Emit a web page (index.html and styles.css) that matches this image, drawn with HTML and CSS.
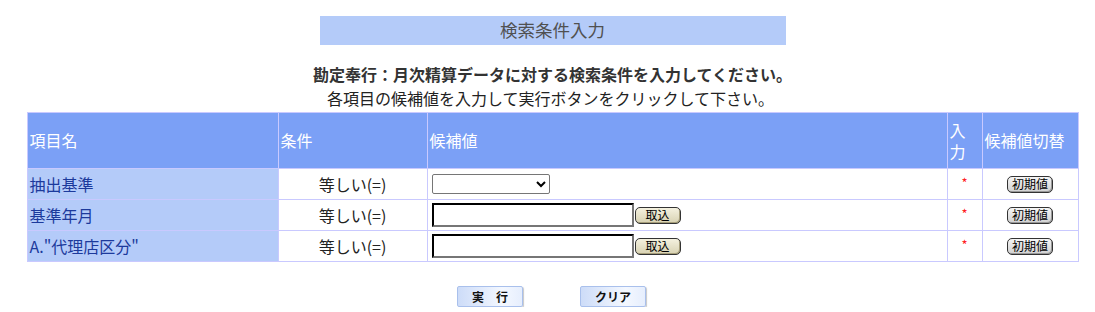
FILE: index.html
```html
<!DOCTYPE html>
<html lang="ja">

<head>
    <meta charset="UTF-8">
    <meta name="viewport" content="width=device-width, initial-scale=1.0">
    <title>検索条件入力</title>
    <link rel="stylesheet" href="styles.css">
</head>

<body>
    <div class="page">
        <div class="title-bar">検索条件入力</div>

        <p class="lead">勘定奉行：月次精算データに対する検索条件を入力してください。</p>
        <p class="note">各項目の候補値を入力して実行ボタンをクリックして下さい。</p>

        <table class="cond-table">
            <thead>
                <tr>
                    <th class="col-name">項目名</th>
                    <th class="col-cond">条件</th>
                    <th class="col-value">候補値</th>
                    <th class="col-req">入力</th>
                    <th class="col-switch">候補値切替</th>
                </tr>
            </thead>
            <tbody>
                <tr>
                    <td class="item">抽出基準</td>
                    <td class="cond">等しい(=)</td>
                    <td class="value">
                        <select class="pick"><option></option></select>
                    </td>
                    <td class="req">*</td>
                    <td class="switch"><button class="reset-btn">初期値</button></td>
                </tr>
                <tr>
                    <td class="item">基準年月</td>
                    <td class="cond">等しい(=)</td>
                    <td class="value">
                        <input type="text" class="field"><button class="load-btn">取込</button>
                    </td>
                    <td class="req">*</td>
                    <td class="switch"><button class="reset-btn">初期値</button></td>
                </tr>
                <tr>
                    <td class="item">A."代理店区分"</td>
                    <td class="cond">等しい(=)</td>
                    <td class="value">
                        <input type="text" class="field"><button class="load-btn">取込</button>
                    </td>
                    <td class="req">*</td>
                    <td class="switch"><button class="reset-btn">初期値</button></td>
                </tr>
            </tbody>
        </table>

        <div class="actions">
            <button class="action-btn">実&emsp;行</button>
            <button class="action-btn">クリア</button>
        </div>
    </div>
</body>

</html>
```

FILE: styles.css
```css
body {
    margin: 0;
    font-family: "Noto Sans CJK JP", "Noto Sans", sans-serif;
    font-size: 16px;
    color: #222;
    background: #fff;
}

.page {
    width: 1051px;
    padding: 16px 0 0 27px;
    display: flex;
    flex-direction: column;
    align-items: center;
}

.title-bar {
    width: 466px;
    height: 29px;
    line-height: 28px;
    background-color: #b4cbf9;
    color: #505050;
    text-align: center;
    font-size: 17.5px;
}

.lead {
    margin: 18px 0 0 0;
    font-weight: bold;
    line-height: 23px;
    color: #333;
}

.note {
    margin: 0;
    line-height: 24px;
    color: #222;
    transform: translateX(-2px);
}

.cond-table {
    border-collapse: collapse;
    width: 1051px;
    margin-top: 2px;
    table-layout: fixed;
}

.cond-table th,
.cond-table td {
    border: 1px solid #c9c9ff;
    padding: 0 2px;
}

.cond-table th {
    background-color: #7ba0f6;
    color: #fff;
    font-weight: normal;
    text-align: left;
    height: 55px;
    line-height: 21px;
}

.col-name { width: 246px; }
.col-cond { width: 144px; }
.col-value { width: 515px; }
.col-req { width: 30px; }
.col-switch { width: 91px; }

.cond-table td {
    height: 30px;
    line-height: 18px;
}

.item {
    background-color: #b4cbf9;
    color: #1c3a9c;
}

.cond {
    text-align: center;
    color: #222;
}

.value {
    white-space: nowrap;
    font-size: 0;
    line-height: 0 !important;
}

.pick {
    width: 118px;
    height: 20px;
    margin-left: 2px;
    border: 1px solid #767676;
    border-radius: 2px;
    background: #fff;
    font-size: 12px;
    vertical-align: middle;
}

.field {
    width: 198px;
    height: 20px;
    margin-left: 2px;
    padding: 0;
    border: 2px inset #767676;
    border-top-color: #222;
    border-left-color: #222;
    vertical-align: middle;
    font-size: 13px;
}

.load-btn {
    width: 46px;
    height: 17px;
    margin-left: 1px;
    padding: 0;
    border: 1px solid #333;
    border-radius: 5px;
    background: linear-gradient(#f4f1df, #d8d2b2);
    box-shadow: inset -1px -1px 0 #a69e7a;
    font-family: "Noto Sans CJK JP", sans-serif;
    font-size: 12px;
    line-height: 14px;
    color: #000;
    vertical-align: middle;
}

.cond-table .req {
    color: #ff2020;
    text-align: center;
    font-size: 13px;
    vertical-align: top;
    height: 25px;
    padding-top: 5px;
}

.switch {
    text-align: center;
    font-size: 0;
    line-height: 0 !important;
}

.reset-btn {
    width: 46px;
    height: 17px;
    padding: 0;
    border: 1px solid #333;
    border-radius: 5px;
    background: linear-gradient(#f6f6f6, #d0d0d0);
    box-shadow: inset -1px -1px 0 #999;
    font-family: "Noto Sans CJK JP", sans-serif;
    font-size: 12px;
    line-height: 14px;
    color: #000;
    vertical-align: middle;
}

.actions {
    display: flex;
    gap: 57px;
    margin-top: 24px;
    transform: translateX(-1px);
}

.action-btn {
    width: 66px;
    height: 21px;
    padding: 0;
    border: 1px solid #a9c0ec;
    border-radius: 2px;
    background: linear-gradient(90deg, #cddcf8, #f4f8ff 70%, #e6eefd);
    box-shadow: 1px 1px 1px #c8c8c8;
    font-family: "Noto Sans CJK JP", sans-serif;
    font-size: 12px;
    font-weight: bold;
    color: #111;
}
```
